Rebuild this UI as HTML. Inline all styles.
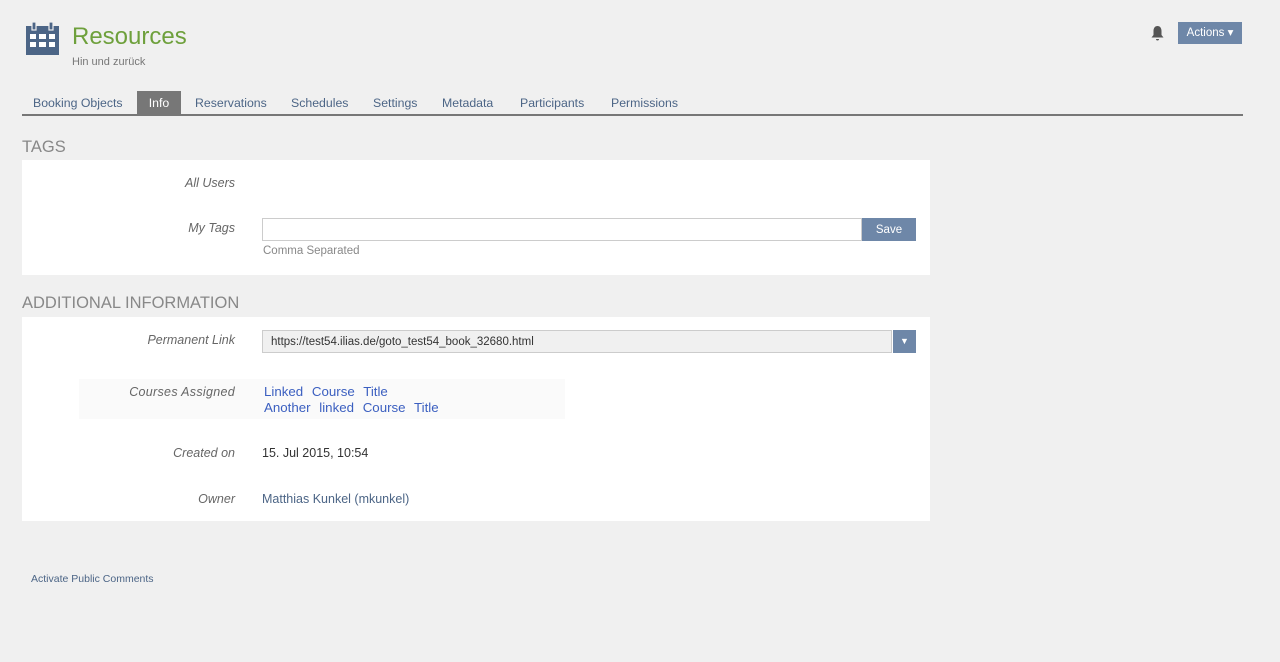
<!DOCTYPE html>
<html><head><style>
body{margin:0;background:#f0f0f0;font-family:"Liberation Sans",sans-serif;width:1280px;height:662px;position:relative;overflow:hidden;color:#333}
.a{position:absolute}
.tab{position:absolute;top:91px;height:23px;line-height:25px;font-size:12.3px;color:#4c6586}
.lab{position:absolute;font-size:12.5px;font-style:italic;color:#666;text-align:right;width:235px;left:0}
.h{position:absolute;left:22px;font-size:16.5px;color:#888}
.panel{position:absolute;left:22px;width:908px;background:#fff}
a{color:#4c6586;text-decoration:none}
</style></head><body>
<svg class="a" style="left:26px;top:22px" width="33" height="33" viewBox="0 0 33 33">
<rect x="0" y="4" width="33" height="29" fill="#4c6586"/>
<rect x="6" y="0" width="4" height="8" fill="#4c6586" stroke="#f0f0f0" stroke-width="1.2"/>
<rect x="23" y="0" width="4" height="8" fill="#4c6586" stroke="#f0f0f0" stroke-width="1.2"/>
<g fill="#fff"><rect x="4" y="12" width="6" height="5"/><rect x="13" y="12" width="7" height="5"/><rect x="23" y="12" width="6" height="5"/><rect x="4" y="20" width="6" height="5"/><rect x="13" y="20" width="7" height="5"/><rect x="23" y="20" width="6" height="5"/></g>
</svg>
<div class="a" style="left:72px;top:23px;font-size:24px;color:#6ea03c">Resources</div>
<div class="a" style="left:72px;top:56px;font-size:11px;color:#777">Hin und zurück</div>
<svg class="a" style="left:1151px;top:26px" width="13" height="15" viewBox="0 0 13 15"><path d="M6.5 0C4 0 2.5 2 2.5 5v4L0.5 11.5h12L10.5 9V5C10.5 2 9 0 6.5 0z M5 13h3a1.5 1.5 0 0 1-3 0z" fill="#555"/></svg>
<div class="a" style="left:1178px;top:22px;width:64px;height:22px;background:#6e87a8;color:#fff;font-size:11.5px;line-height:23px;text-align:center">Actions ▾</div>
<div class="tab" style="left:33px">Booking Objects</div>
<div class="tab" style="left:137px;width:44px;background:#777;color:#fff;text-align:center">Info</div>
<div class="tab" style="left:195px">Reservations</div>
<div class="tab" style="left:291px">Schedules</div>
<div class="tab" style="left:373px">Settings</div>
<div class="tab" style="left:442px">Metadata</div>
<div class="tab" style="left:520px">Participants</div>
<div class="tab" style="left:611px">Permissions</div>
<div class="a" style="left:22px;top:114px;width:1221px;height:2px;background:#777"></div>
<div class="h" style="top:138px">TAGS</div>
<div class="panel" style="top:160px;height:115px"></div>
<div class="lab" style="top:176px">All Users</div>
<div class="lab" style="top:221px">My Tags</div>
<div class="a" style="left:262px;top:218px;width:598px;height:21px;border:1px solid #ccc;background:#fff"></div>
<div class="a" style="left:862px;top:218px;width:54px;height:23px;background:#6e87a8;color:#fff;font-size:11.5px;line-height:24px;text-align:center">Save</div>
<div class="a" style="left:263px;top:245px;font-size:11.5px;color:#888">Comma Separated</div>
<div class="h" style="top:294px">ADDITIONAL INFORMATION</div>
<div class="panel" style="top:317px;height:204px"></div>
<div class="lab" style="top:333px">Permanent Link</div>
<div class="a" style="left:262px;top:330px;width:630px;height:23px;border:1px solid #ccc;background:#f0f0f0;font-size:11.5px;line-height:22px;padding-left:8px;box-sizing:border-box;color:#333">https://test54.ilias.de/goto_test54_book_32680.html</div>
<div class="a" style="left:893px;top:330px;width:23px;height:23px;background:#6e87a8;color:#fff;font-size:9px;line-height:23px;text-align:center">▼</div>
<div class="a" style="left:79px;top:379px;width:486px;height:40px;background:#fafafa"></div>
<div class="lab" style="top:385px;letter-spacing:.3px">Courses Assigned</div>
<div class="a" style="left:264px;top:384px;font-size:13.3px;color:#3b5fc0;line-height:16px;word-spacing:5px">Linked Course Title<br>Another linked Course Title</div>
<div class="lab" style="top:446px">Created on</div>
<div class="a" style="left:262px;top:446px;font-size:12.5px">15. Jul 2015, 10:54</div>
<div class="lab" style="top:492px">Owner</div>
<div class="a" style="left:262px;top:492px;font-size:12.5px;color:#4c6586">Matthias Kunkel (mkunkel)</div>
<div class="a" style="left:31px;top:573px;font-size:10.5px;color:#4c6586">Activate Public Comments</div>
</body></html>
